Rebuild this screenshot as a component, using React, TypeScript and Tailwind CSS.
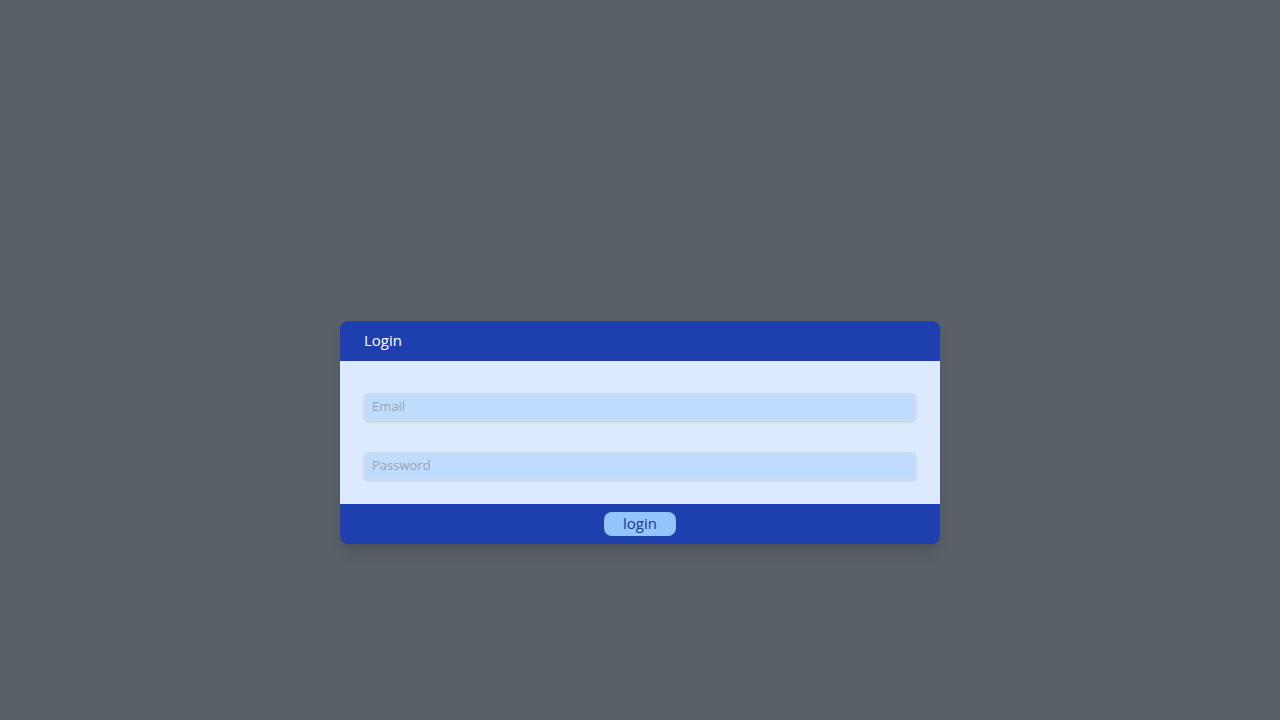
import React from "react";

export default function App() {
  return (
    <div className="min-h-[720px] w-full bg-[#595f67] flex justify-center pt-[321px]" style={{ fontFamily: '"Open Sans", "Liberation Sans", sans-serif' }}>
      <div className="w-[600px] h-[223px] rounded-lg overflow-hidden shadow-lg flex flex-col">
        <div className="h-[40px] bg-[#1e40af] flex items-center px-6 pb-[2px] text-white text-[15px]">Login</div>
        <div className="h-[143px] bg-[#dbeafe] px-6 pt-8 flex flex-col gap-[31px]">
          <input
            placeholder="Email"
            className="h-[28px] w-full rounded bg-[#bfdbfe] border border-[#d4dde9] shadow-sm pl-[7px] pr-2 pb-[3px] text-[13px] text-gray-700 placeholder:text-[#9ca3af] outline-none"
          />
          <input
            type="password"
            placeholder="Password"
            className="h-[28px] w-full rounded bg-[#bfdbfe] border border-[#d4dde9] shadow-sm pl-[7px] pr-2 pb-[3px] text-[13px] text-gray-700 placeholder:text-[#9ca3af] outline-none"
          />
        </div>
        <div className="h-[40px] bg-[#1e40af] flex items-center justify-center">
          <button className="w-[72px] h-[24px] rounded-lg bg-[#93c5fd] text-[#1e3a8a] text-[15px] leading-none pb-[2px]">login</button>
        </div>
      </div>
    </div>
  );
}
